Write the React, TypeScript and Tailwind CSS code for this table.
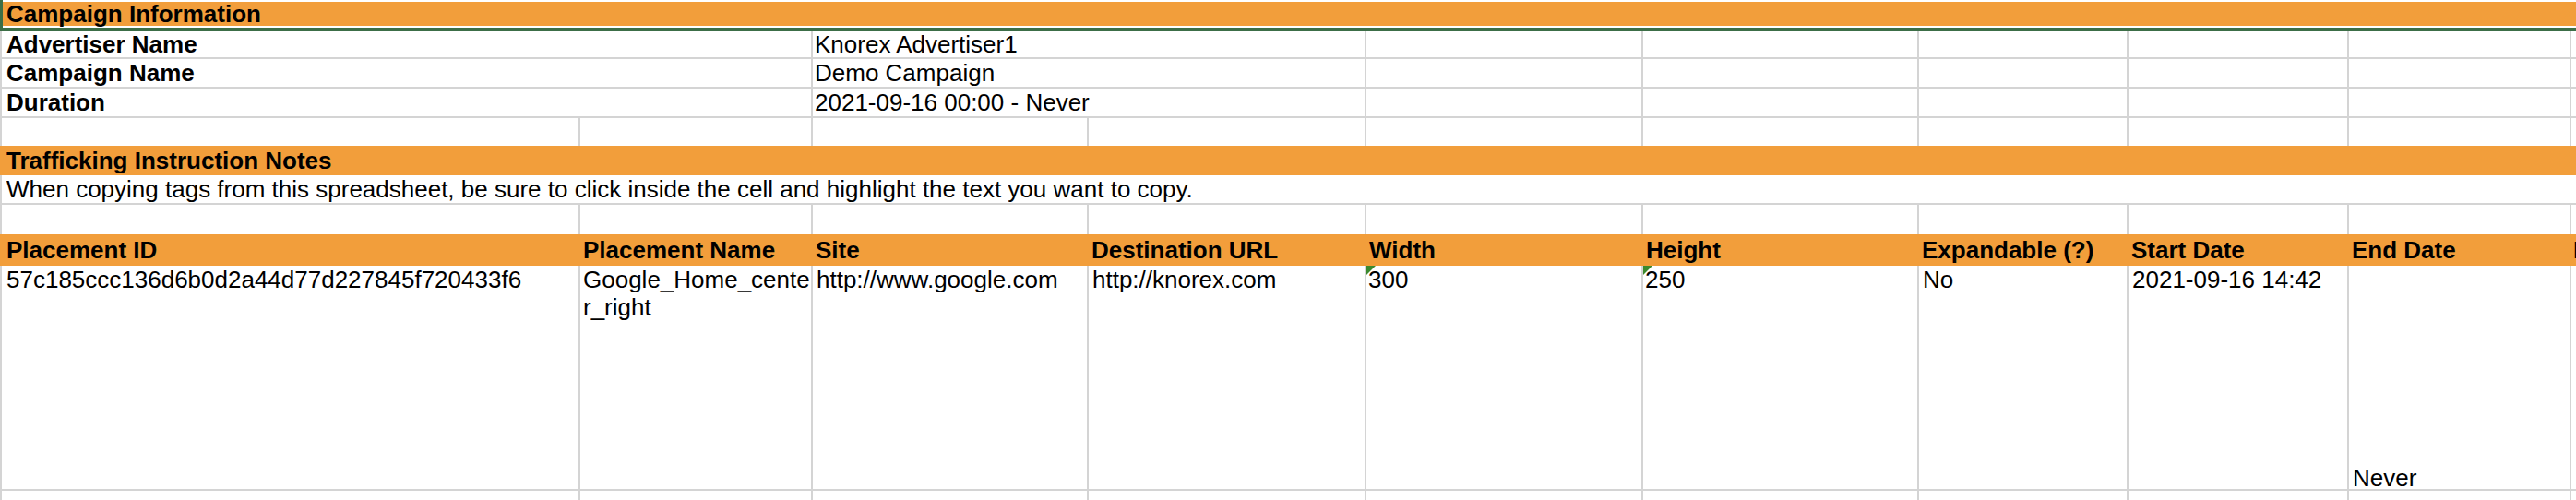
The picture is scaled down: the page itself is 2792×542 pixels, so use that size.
const colWidths = [
  "w-[627px]",
  "w-[252px]",
  "w-[299px]",
  "w-[301px]",
  "w-[300px]",
  "w-[299px]",
  "w-[227px]",
  "w-[239px]",
  "w-[241px]",
];

const campaignInfo = [
  { label: "Advertiser Name", value: "Knorex Advertiser1", height: "h-[30px]" },
  { label: "Campaign Name", value: "Demo Campaign", height: "h-[32px]" },
  { label: "Duration", value: "2021-09-16 00:00 - Never", height: "h-[32px]" },
];

const placementHeaders = [
  "Placement ID",
  "Placement Name",
  "Site",
  "Destination URL",
  "Width",
  "Height",
  "Expandable (?)",
  "Start Date",
  "End Date",
];

function EmptyCells({ from }: { from: number }) {
  return (
    <>
      {colWidths.slice(from).map((w, i) => (
        <div
          key={i}
          className={`${w} h-full shrink-0 border-r-2 border-[#d4d4d4]`}
        />
      ))}
      <div className="h-full flex-1" />
    </>
  );
}

function TextFlag() {
  return (
    <svg
      className="absolute left-0 top-0"
      width="10"
      height="10"
      viewBox="0 0 10 10"
    >
      <polygon points="0,0 10,0 0,10" fill="#3c8a2e" />
    </svg>
  );
}

export default function App() {
  return (
    <div className="h-[542px] w-[2792px] overflow-hidden bg-white font-['Liberation_Sans',Arial,sans-serif] text-[26px] leading-[30px] text-black">
      {/* selected title row */}
      <div className="h-[34px] border-b-4 border-l-[3px] border-[#3c6e47] py-[2px]">
        <div className="flex h-[26px] items-center bg-[#f29e3b] pl-[4px] font-bold">
          Campaign Information
        </div>
      </div>

      {campaignInfo.map((row) => (
        <div
          key={row.label}
          className={`flex ${row.height} border-b-2 border-l-2 border-[#d4d4d4]`}
        >
          <div className="flex h-full w-[879px] shrink-0 items-center border-r-2 border-[#d4d4d4] pl-[5px] font-bold">
            {row.label}
          </div>
          <div className="flex h-full w-[600px] shrink-0 items-center border-r-2 border-[#d4d4d4] pl-[2px]">
            {row.value}
          </div>
          <EmptyCells from={4} />
        </div>
      ))}

      <div className="flex h-[30px] border-l-2 border-[#d4d4d4]">
        <EmptyCells from={0} />
      </div>

      <div className="flex h-[32px] items-center bg-[#f29e3b] pl-[7px] font-bold">
        Trafficking Instruction Notes
      </div>

      <div className="flex h-[32px] items-center border-b-2 border-l-2 border-[#d4d4d4] pl-[5px]">
        When copying tags from this spreadsheet, be sure to click inside the
        cell and highlight the text you want to copy.
      </div>

      <div className="flex h-[32px] border-l-2 border-[#d4d4d4]">
        <EmptyCells from={0} />
      </div>

      <div className="flex h-[34px] items-center border-l-2 border-[#f29e3b] bg-[#f29e3b] font-bold">
        {placementHeaders.map((h, i) => (
          <div
            key={h}
            className={`${colWidths[i]} shrink-0 overflow-hidden whitespace-nowrap border-r-2 border-transparent ${
              i === 0 ? "pl-[5px]" : "pl-[3px]"
            }`}
          >
            {h}
          </div>
        ))}
        <div className="flex-1 overflow-hidden whitespace-nowrap pl-[2px]">
          Placement Tag
        </div>
      </div>

      <div className="flex h-[244px] border-b-2 border-l-2 border-[#d4d4d4]">
        <div className="h-full w-[627px] shrink-0 border-r-2 border-[#d4d4d4] pl-[5px]">
          57c185ccc136d6b0d2a44d77d227845f720433f6
        </div>
        <div className="h-full w-[252px] shrink-0 overflow-hidden border-r-2 border-[#d4d4d4] pl-[3px]">
          <div className="whitespace-nowrap">Google_Home_cente</div>
          <div className="whitespace-nowrap">r_right</div>
        </div>
        <div className="h-full w-[299px] shrink-0 border-r-2 border-[#d4d4d4] pl-[4px]">
          http://www.google.com
        </div>
        <div className="h-full w-[301px] shrink-0 border-r-2 border-[#d4d4d4] pl-[4px]">
          http://knorex.com
        </div>
        <div className="relative h-full w-[300px] shrink-0 border-r-2 border-[#d4d4d4] pl-[2px]">
          <TextFlag />
          300
        </div>
        <div className="relative h-full w-[299px] shrink-0 border-r-2 border-[#d4d4d4] pl-[2px]">
          <TextFlag />
          250
        </div>
        <div className="h-full w-[227px] shrink-0 border-r-2 border-[#d4d4d4] pl-[4px]">
          No
        </div>
        <div className="h-full w-[239px] shrink-0 border-r-2 border-[#d4d4d4] pl-[4px]">
          2021-09-16 14:42
        </div>
        <div className="flex h-full w-[241px] shrink-0 items-end border-r-2 border-[#d4d4d4] pl-[4px] leading-[24px]">
          Never
        </div>
        <div className="h-full flex-1" />
      </div>

      <div className="flex h-[10px] border-l-2 border-[#d4d4d4]">
        <EmptyCells from={0} />
      </div>
    </div>
  );
}
